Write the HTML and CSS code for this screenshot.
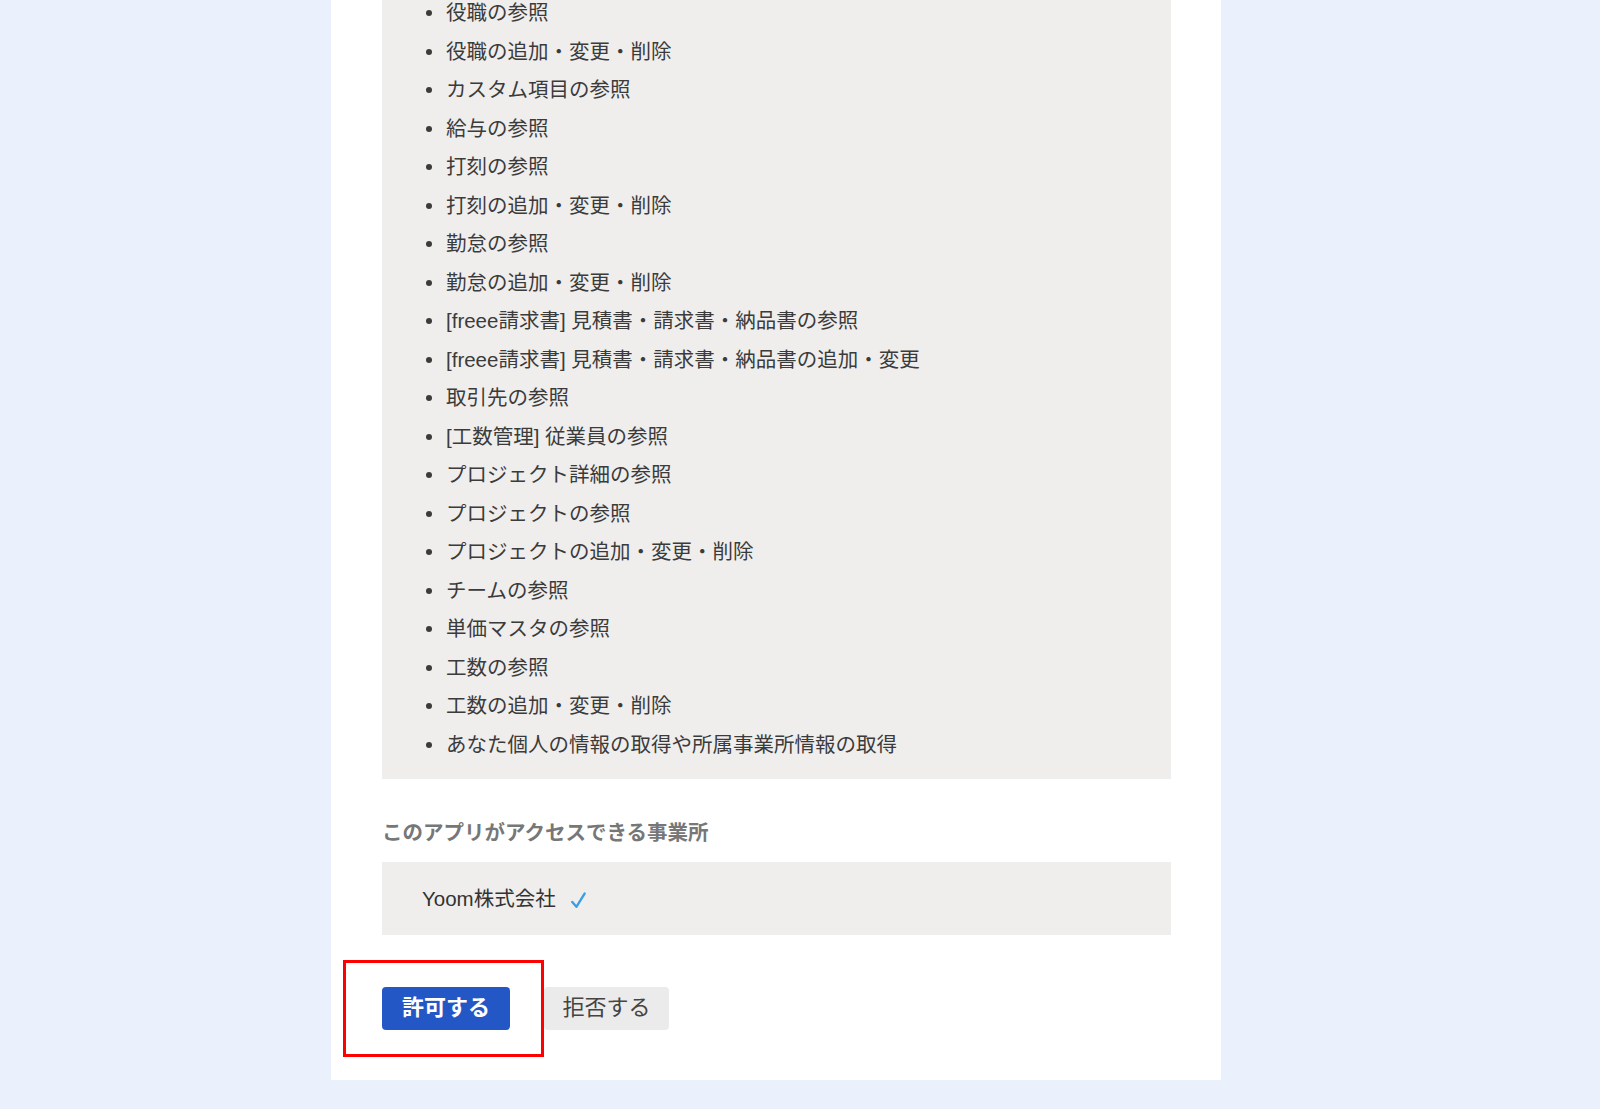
FILE: index.html
```html
<!DOCTYPE html>
<html lang="ja">
<head>
<meta charset="utf-8">
<title>アプリ連携の許可</title>
<link rel="stylesheet" href="styles.css">
</head>
<body>
<div class="page">
  <div class="panel">
    <div class="scope-box">
      <ul class="scope-list">
        <li>役職の参照</li>
        <li>役職の追加・変更・削除</li>
        <li>カスタム項目の参照</li>
        <li>給与の参照</li>
        <li>打刻の参照</li>
        <li>打刻の追加・変更・削除</li>
        <li>勤怠の参照</li>
        <li>勤怠の追加・変更・削除</li>
        <li>[freee請求書] 見積書・請求書・納品書の参照</li>
        <li>[freee請求書] 見積書・請求書・納品書の追加・変更</li>
        <li>取引先の参照</li>
        <li>[工数管理] 従業員の参照</li>
        <li>プロジェクト詳細の参照</li>
        <li>プロジェクトの参照</li>
        <li>プロジェクトの追加・変更・削除</li>
        <li>チームの参照</li>
        <li>単価マスタの参照</li>
        <li>工数の参照</li>
        <li>工数の追加・変更・削除</li>
        <li>あなた個人の情報の取得や所属事業所情報の取得</li>
      </ul>
    </div>

    <h3 class="section-title">このアプリがアクセスできる事業所</h3>
    <div class="company-box">
      <span class="company-name">Yoom株式会社</span>
      <svg class="check" width="15" height="17" viewBox="0 0 15 17" aria-hidden="true">
        <path d="M1.3 10 L5.4 14.8 L13.6 1.6" fill="none" stroke="#3b9fe3" stroke-width="2.4" stroke-linecap="round" stroke-linejoin="round"/>
      </svg>
    </div>

    <div class="actions">
      <button class="btn btn-allow">許可する</button>
      <button class="btn btn-deny">拒否する</button>
      <div class="highlight"></div>
    </div>
  </div>
</div>
</body>
</html>
```

FILE: styles.css
```css
html, body {
  margin: 0;
  padding: 0;
}

body {
  background: #eaf1fc;
  height: 1109px;
  overflow: hidden;
  font-family: "Liberation Sans", "Noto Sans CJK JP", sans-serif;
  color: #3b3b3b;
}

.page {
  margin-left: 331px;
  width: 890px;
  margin-top: -22px;
}

.panel {
  background: #ffffff;
  padding: 0 50px 50px 51px;
}

.scope-box {
  background: #efeeed;
  padding: 16px 24px 15px 24px;
}

.scope-list {
  margin: 0;
  padding-left: 20px;
  list-style: none;
}

.scope-list li {
  display: flex;
  align-items: center;
  font-size: 20.5px;
  line-height: 38.5px;
  color: #3b3b3b;
}

.scope-list li::before {
  content: "";
  flex: none;
  width: 6px;
  height: 6px;
  border-radius: 50%;
  background: #3b3b3b;
  margin-right: 14px;
}

.section-title {
  margin: 39px 0 14px 0;
  font-size: 20.5px;
  line-height: 30px;
  font-weight: bold;
  color: #777777;
}

.company-box {
  background: #efeeed;
  padding: 22px 40px 21px 40px;
  display: flex;
  align-items: center;
  gap: 15px;
}

.company-name {
  font-size: 20.5px;
  line-height: 30px;
  color: #333333;
}

.check {
  display: block;
  margin-top: 2px;
}

.actions {
  position: relative;
  display: flex;
  align-items: center;
  margin-top: 52px;
}

.btn {
  font-family: "Liberation Sans", "Noto Sans CJK JP", sans-serif;
  font-size: 22px;
  line-height: 1;
  height: 43px;
  border: none;
  border-radius: 4px;
  padding: 0 0 2px 0;
  cursor: pointer;
}

.btn-allow {
  width: 128px;
  background: #2457c6;
  color: #ffffff;
  font-weight: bold;
}

.btn-deny {
  width: 125px;
  margin-left: 34px;
  background: #ebebeb;
  color: #444444;
}

.highlight {
  position: absolute;
  left: -39px;
  top: -27px;
  width: 201px;
  height: 97px;
  box-sizing: border-box;
  border: 3px solid #ff0000;
  pointer-events: none;
}
```
